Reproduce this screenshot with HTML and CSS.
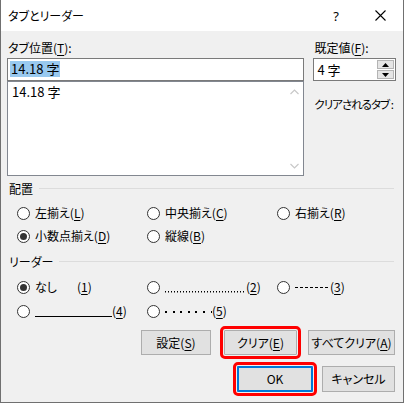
FILE: index.html
```html
<!DOCTYPE html>
<html lang="ja">
<head>
<meta charset="utf-8">
<title>タブとリーダー</title>
<link rel="stylesheet" href="styles.css">
</head>
<body>
<div class="dialog">
  <header class="titlebar">
    <span class="title">タブとリーダー</span>
    <span class="tb-help">?</span>
    <span class="tb-close">
      <svg width="11" height="11" viewBox="0 0 11 11"><path d="M0.5 0.5 L10.5 10.5 M10.5 0.5 L0.5 10.5" stroke="#000" stroke-width="1.1" fill="none"/></svg>
    </span>
  </header>

  <main class="content">
    <section class="top">
      <div class="col-left">
        <div class="lbl">タブ位置(<u>T</u>):</div>
        <div class="field"><span class="sel">14.18 字</span></div>
        <div class="list">
          <div class="list-items"><div class="list-item">14.18 字</div></div>
          <div class="vscroll">
            <svg width="9" height="6" viewBox="0 0 9 6"><path d="M0.5 5 L4.5 1 L8.5 5" stroke="#c8c8c8" stroke-width="1.2" fill="none"/></svg>
            <svg width="9" height="6" viewBox="0 0 9 6"><path d="M0.5 1 L4.5 5 L8.5 1" stroke="#c8c8c8" stroke-width="1.2" fill="none"/></svg>
          </div>
        </div>
      </div>
      <div class="col-right">
        <div class="lbl">既定値(<u>F</u>):</div>
        <div class="spin">
          <span class="spin-val">4 字</span>
          <div class="spin-btns">
            <span class="spin-btn"><svg width="7" height="4" viewBox="0 0 7 4"><path d="M0 4 L3.5 0 L7 4 Z" fill="#000"/></svg></span>
            <span class="spin-btn"><svg width="7" height="4" viewBox="0 0 7 4"><path d="M0 0 L3.5 4 L7 0 Z" fill="#000"/></svg></span>
          </div>
        </div>
        <div class="note">クリアされるタブ :</div>
      </div>
    </section>

    <section class="group group-align">
      <div class="group-head"><span>配置</span><span class="rule"></span></div>
      <div class="options">
        <label class="opt"><span class="radio"></span>左揃え(<u>L</u>)</label>
        <label class="opt"><span class="radio"></span>中央揃え(<u>C</u>)</label>
        <label class="opt"><span class="radio"></span>右揃え(<u>R</u>)</label>
        <label class="opt"><span class="radio on"></span>小数点揃え(<u>D</u>)</label>
        <label class="opt"><span class="radio"></span>縦線(<u>B</u>)</label>
      </div>
    </section>

    <section class="group group-leader">
      <div class="group-head"><span>リーダー</span><span class="rule"></span></div>
      <div class="options leaders">
        <label class="opt"><span class="radio on"></span><span class="none">なし</span>(<u>1</u>)</label>
        <label class="opt"><span class="radio"></span><span class="lead dots"></span>(<u>2</u>)</label>
        <label class="opt"><span class="radio"></span><span class="lead dashes"></span>(<u>3</u>)</label>
        <label class="opt"><span class="radio"></span><span class="lead solid"></span>(<u>4</u>)</label>
        <label class="opt"><span class="radio"></span><span class="lead midots"></span>(<u>5</u>)</label>
      </div>
    </section>

    <div class="btn-row row1">
      <span class="btn w-set">設定(<u>S</u>)</span>
      <span class="btn w-clear marked">クリア(<u>E</u>)</span>
      <span class="btn w-all">すべてクリア(<u>A</u>)</span>
    </div>
    <div class="btn-row row2">
      <span class="btn default w-ok marked">OK</span>
      <span class="btn w-cancel">キャンセル</span>
    </div>
  </main>
</div>
</body>
</html>
```

FILE: styles.css
```css
* { box-sizing: border-box; }

html, body {
  margin: 0;
  padding: 0;
  background: #f0f0f0;
}

body {
  font-family: "Noto Sans CJK JP", "Noto Sans", sans-serif;
  font-feature-settings: "palt";
  font-size: 12px;
  color: #000;
}

u { text-decoration-thickness: 1px; text-underline-offset: 2px; }

.dialog {
  width: 404px;
  height: 403px;
  background: #f0f0f0;
  border: 1px solid #707070;
  border-top: none;
  display: flex;
  flex-direction: column;
}

/* title bar */
.titlebar {
  height: 31px;
  background: #fff;
  display: flex;
  align-items: center;
  padding-left: 7px;
  flex-shrink: 0;
}
.title { flex: 1; line-height: 16px; }
.tb-help {
  font-family: "Noto Sans", sans-serif;
  font-size: 13px;
  width: 20px;
  text-align: center;
  margin-right: 29px;
}
.tb-close {
  display: flex;
  width: 11px;
  height: 11px;
  margin-right: 17px;
}

.content {
  padding: 9px 7px 0 6px;
  line-height: 16px;
}

/* top: tab position list and default stop */
.top {
  display: flex;
  gap: 9px;
}
.col-left { width: 299px; }
.col-right { width: 83px; }
.lbl { padding-left: 1px; height: 16px; white-space: nowrap; }

.field {
  margin-top: 2px;
  height: 23px;
  background: #fff;
  border: 1px solid #7a7a7a;
  padding: 2px 0 0 2px;
}
.sel {
  display: inline-block;
  font-size: 13px;
  line-height: 16px;
  background: #99c9ef;
  padding: 0 1px;
}

.list {
  height: 95px;
  background: #fff;
  border: 1px solid #828790;
  display: flex;
}
.list-items { flex: 1; padding: 2px 0 0 4px; }
.list-item { font-size: 13px; line-height: 16px; }
.vscroll {
  width: 17px;
  display: flex;
  flex-direction: column;
  justify-content: space-between;
  align-items: center;
  padding: 7px 0 6px;
}

.spin {
  margin-top: 2px;
  height: 23px;
  background: #fff;
  border: 1px solid #7a7a7a;
  display: flex;
  align-items: center;
  padding-left: 3px;
}
.spin-val { flex: 1; font-size: 13px; }
.spin-btns {
  width: 17px;
  height: 19px;
  margin-right: 1px;
  display: flex;
  flex-direction: column;
  gap: 1px;
}
.spin-btn {
  flex: 1;
  background: #e5e5e5;
  border: 1px solid #b4b4b4;
  display: flex;
  align-items: center;
  justify-content: center;
}
.note {
  margin-top: 15px;
  padding-left: 1px;
  white-space: nowrap;
  font-size: 11.5px;
  letter-spacing: -1px;
}

/* option groups */
.group-head {
  display: flex;
  align-items: center;
  gap: 6px;
  padding-left: 2px;
  padding-right: 2px;
}
.rule { flex: 1; border-top: 1px solid #dcdcdc; margin-top: -2px; }
.group-align { margin-top: 5px; }
.group-leader { margin-top: 10px; }

.options {
  display: grid;
  grid-template-columns: 130px 130px 1fr;
  padding-left: 10px;
  margin-top: 8px;
  row-gap: 7px;
}
.leaders { margin-top: 9px; row-gap: 8px; }

.opt {
  display: flex;
  align-items: center;
  height: 16px;
  white-space: nowrap;
}
.radio {
  width: 13px;
  height: 13px;
  border: 1px solid #333;
  border-radius: 50%;
  background: #fff;
  margin-right: 5px;
  flex-shrink: 0;
  display: flex;
  align-items: center;
  justify-content: center;
}
.radio.on::after {
  content: "";
  width: 7px;
  height: 7px;
  border-radius: 50%;
  background: #333;
}

.none { width: 42px; }
.lead { display: inline-block; height: 16px; }
.dots {
  width: 81px;
  background: repeating-linear-gradient(to right, #000 0 1.5px, transparent 1.5px 3px) left 12px / 100% 1.5px no-repeat;
}
.dashes {
  width: 35px;
  background: repeating-linear-gradient(to right, #000 0 3px, transparent 3px 5px) left 8px / 100% 1px no-repeat;
}
.solid {
  width: 77px;
  background: linear-gradient(#000, #000) left 13px / 100% 1px no-repeat;
}
.midots {
  width: 47px;
  background: repeating-linear-gradient(to right, #000 0 2px, transparent 2px 7.6px) left 8px / 100% 2px no-repeat;
}

/* buttons */
.btn-row {
  display: flex;
  justify-content: flex-end;
  align-items: center;
  padding-right: 1px;
}
.row1 { margin-top: 11px; gap: 11px; }
.row1 .w-set { margin-right: 2px; }
.row2 { margin-top: 11px; gap: 9px; }

.btn {
  height: 25px;
  background: #e1e1e1;
  border: 1px solid #adadad;
  display: flex;
  align-items: center;
  justify-content: center;
  white-space: nowrap;
}
.btn.default { border: 2px solid #0078d7; }
.btn.marked {
  outline: 3px solid #f00;
  outline-offset: 1px;
  border-radius: 1px;
}
.w-set { width: 70px; }
.w-clear { width: 73px; }
.w-all { width: 87px; }
.w-ok { width: 76px; height: 26px; }
.w-cancel { width: 73px; height: 26px; }
```
